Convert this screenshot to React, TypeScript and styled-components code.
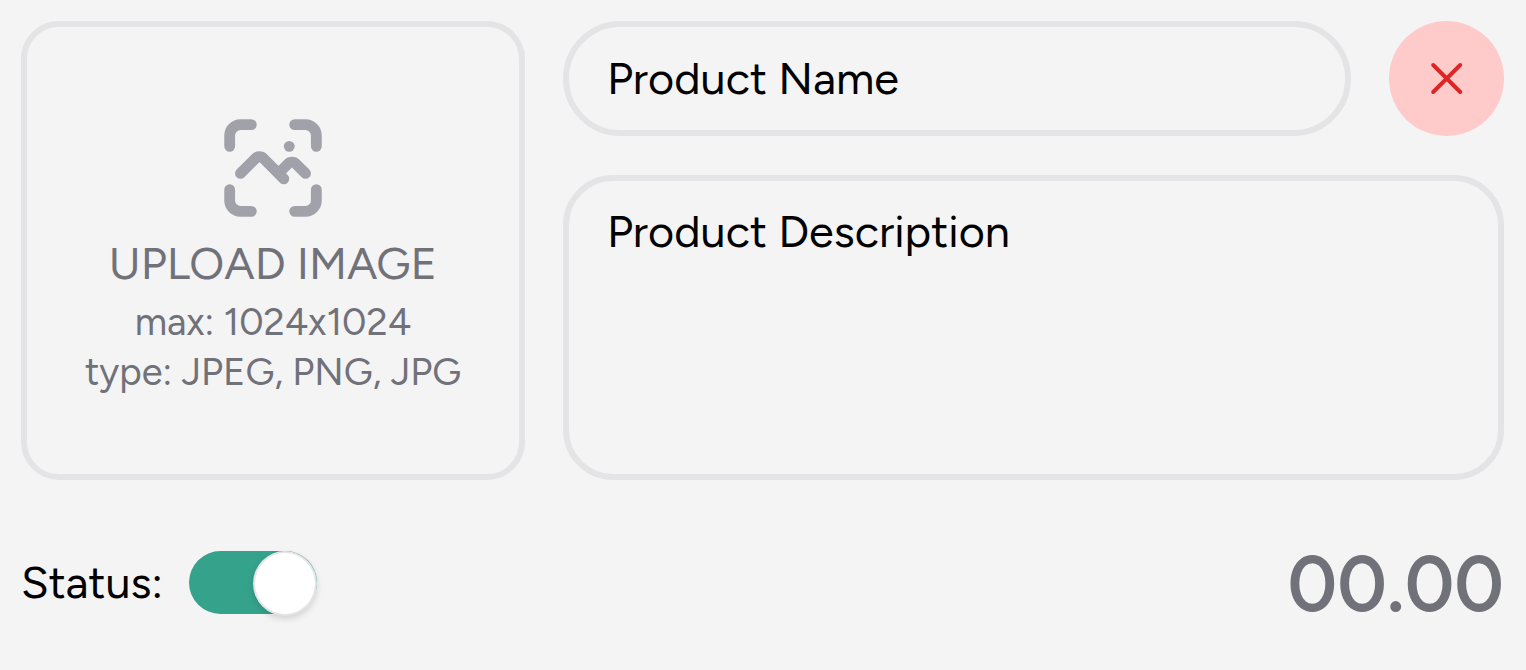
import React from "react";
import styled, { createGlobalStyle } from "styled-components";

const GlobalStyle = createGlobalStyle`
  *, *::before, *::after {
    box-sizing: border-box;
  }
  body {
    margin: 0;
    background: #f4f4f4;
    color: #000;
    font-family: Figtree, Inter, "Liberation Sans", sans-serif;
    font-size: 45px;
    line-height: 52px;
    font-feature-settings: "calt" 0;
  }
  input, textarea, button {
    font: inherit;
    font-feature-settings: inherit;
    color: inherit;
  }
`;

const Form = styled.form`
  display: flex;
  flex-direction: column;
  gap: 62px;
  padding: 21px 22px 21px 21px;
`;

const Details = styled.div`
  display: grid;
  grid-template-columns: minmax(0, 504fr) minmax(0, 941fr);
  gap: 38px;
`;

const UploadBox = styled.label`
  display: flex;
  flex-direction: column;
  align-items: center;
  justify-content: center;
  padding-bottom: 2px;
  border: 6px solid #e4e4e6;
  border-radius: 38px;
  color: #71717a;
  text-align: center;
  cursor: pointer;
`;

const FileInput = styled.input`
  position: absolute;
  width: 1px;
  height: 1px;
  opacity: 0;
`;

const UploadIcon = styled.svg`
  width: 130px;
  height: 130px;
  color: #a1a1aa;
`;

const UploadTitle = styled.span`
  margin-bottom: 4px;
  line-height: 60px;
`;

const UploadHint = styled.span`
  font-size: 38px;
  line-height: 50px;
`;

const Fields = styled.div`
  display: flex;
  flex-direction: column;
  gap: 39px;
`;

const NameRow = styled.div`
  display: flex;
  gap: 38px;
`;

const NameInput = styled.input`
  flex: 1;
  min-width: 0;
  height: 115px;
  padding: 0 38px 2px;
  border: 6px solid #e4e4e6;
  border-radius: 58px;
  background: transparent;
  outline: none;

  &::placeholder {
    color: #000;
    opacity: 1;
  }
`;

const DescriptionInput = styled.textarea`
  display: block;
  width: 100%;
  height: 305px;
  padding: 24px 38px;
  border: 6px solid #e4e4e6;
  border-radius: 50px;
  background: transparent;
  outline: none;
  resize: none;

  &::placeholder {
    color: #000;
    opacity: 1;
  }
`;

const RemoveButton = styled.button`
  display: flex;
  flex: none;
  align-items: center;
  justify-content: center;
  width: 115px;
  height: 115px;
  padding: 0;
  border: 0;
  border-radius: 50%;
  background: #fecaca;
  color: #dc2626;
  cursor: pointer;
`;

const Footer = styled.div`
  display: flex;
  align-items: center;
  justify-content: space-between;
`;

const Status = styled.label`
  display: flex;
  align-items: center;
  gap: 26px;
`;

const Switch = styled.input`
  appearance: none;
  display: flex;
  width: 128px;
  height: 63px;
  margin: 0;
  border-radius: 32px;
  background: #d4d4d8;
  cursor: pointer;

  &::before {
    content: "";
    width: 64px;
    height: 65px;
    flex: none;
    border: 2px solid #e4e4e7;
    border-radius: 50%;
    background: #fff;
    box-shadow: 0 3px 6px rgba(0, 0, 0, 0.14);
  }

  &:checked {
    justify-content: flex-end;
    background: #35a28c;
  }
`;

const PriceInput = styled.input`
  width: 320px;
  height: 80px;
  padding: 3px 0 0;
  border: 0;
  background: transparent;
  font-size: 77px;
  font-weight: 600;
  line-height: 77px;
  text-align: right;
  outline: none;

  &::placeholder {
    color: #71717a;
    opacity: 1;
  }
`;

export default function App() {
  return (
    <>
      <GlobalStyle />
      <Form>
        <Details>
          <UploadBox>
            <FileInput type="file" accept="image/jpeg,image/png" />
            <UploadIcon
              viewBox="0 0 24 24"
              fill="none"
              stroke="currentColor"
              strokeWidth="2"
              strokeLinecap="round"
              strokeLinejoin="round"
              aria-hidden="true"
            >
              <path d="M8 4H6a2 2 0 0 0-2 2v2M16 4h2a2 2 0 0 1 2 2v2M4 16v2a2 2 0 0 0 2 2h2M20 16v2a2 2 0 0 1-2 2h-2" />
              <path d="M6 13l2.79-2.79a1 1 0 0 1 1.42 0L14 14" />
              <path d="M13.5 12.5l1.29-1.29a1 1 0 0 1 1.42 0L18 13" />
              <circle cx="15" cy="8" r="1" fill="currentColor" stroke="none" />
            </UploadIcon>
            <UploadTitle>UPLOAD IMAGE</UploadTitle>
            <UploadHint>max: 1024x1024</UploadHint>
            <UploadHint>type: JPEG, PNG, JPG</UploadHint>
          </UploadBox>
          <Fields>
            <NameRow>
              <NameInput type="text" placeholder="Product Name" aria-label="Product Name" />
              <RemoveButton type="button" aria-label="Remove product">
                <svg width="58" height="58" viewBox="0 0 58 58" fill="none" stroke="currentColor" strokeWidth="4" strokeLinecap="round" aria-hidden="true">
                  <path d="M15.2 15l27 27M42.2 15l-27 27" />
                </svg>
              </RemoveButton>
            </NameRow>
            <DescriptionInput placeholder="Product Description" aria-label="Product Description" />
          </Fields>
        </Details>
        <Footer>
          <Status>
            Status:
            <Switch type="checkbox" role="switch" defaultChecked />
          </Status>
          <PriceInput type="text" inputMode="decimal" placeholder="00.00" aria-label="Price" />
        </Footer>
      </Form>
    </>
  );
}
